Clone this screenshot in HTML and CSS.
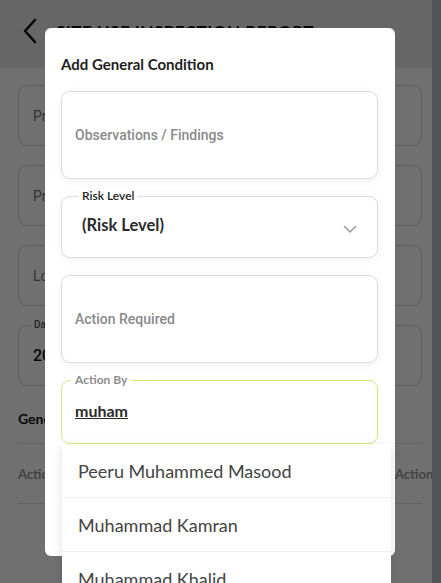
FILE: index.html
```html
<!DOCTYPE html>
<html lang="en">
<head>
  <meta charset="UTF-8" />
  <title>Site Use Inspection Report</title>
  <link rel="stylesheet" href="styles.css">
</head>
<body>
  <div class="app">
    <div class="page">
      <div class="topbar">
        <svg class="back" width="16" height="26" viewBox="0 0 16 26"><path d="M13 2 L3 13 L13 24" fill="none" stroke="#111" stroke-width="2.6" stroke-linecap="round" stroke-linejoin="round"/></svg>
        <div class="topbar-title">SITE USE INSPECTION REPORT</div>
      </div>
      <div class="content">
        <div class="card">Project Name</div>
        <div class="card">Project Number</div>
        <div class="card">Location</div>
        <div class="card card-date"><span class="card-label">Date</span>2024-05-14</div>
        <div class="section-title">General Conditions</div>
        <div class="table-row">
          <span>Action</span>
          <span class="col-right">Action</span>
        </div>
      </div>
    </div>
    <div class="scroll-strip"></div>
    <div class="backdrop"></div>

    <div class="modal">
      <div class="modal-title">Add General Condition</div>
      <div class="fields">
        <div class="field field-tall">
          <span class="placeholder">Observations / Findings</span>
        </div>
        <div class="field field-select">
          <span class="field-label">Risk Level</span>
          <span class="select-value">(Risk Level)</span>
          <svg class="chevron" width="14" height="9" viewBox="0 0 14 9"><path d="M1.5 1.5 L7 7 L12.5 1.5" fill="none" stroke="#9a9a9a" stroke-width="1.6" stroke-linecap="round" stroke-linejoin="round"/></svg>
        </div>
        <div class="field field-tall">
          <span class="placeholder">Action Required</span>
        </div>
        <div class="field-wrap">
          <div class="field field-focus">
            <span class="field-label label-muted">Action By</span>
            <span class="typed">muham</span>
          </div>
          <ul class="suggestions">
            <li>Peeru Muhammed Masood</li>
            <li>Muhammad Kamran</li>
            <li>Muhammad Khalid</li>
          </ul>
        </div>
      </div>
    </div>
  </div>
</body>
</html>
```

FILE: styles.css
```css
* {
  box-sizing: border-box;
}
body {
  margin: 0;
  font-family: "Lato", "Noto Sans", sans-serif;
  background: #fff;
}
.app {
  position: relative;
  width: 441px;
  height: 583px;
  overflow: hidden;
  display: flex;
}
.page {
  flex: 1;
  background: #fff;
  overflow: hidden;
}
.scroll-strip {
  width: 9px;
  background: #bfc2c7;
}
.topbar {
  height: 68px;
  background: #e8e8e8;
  display: flex;
  align-items: center;
  padding: 0 0 6px 22px;
  gap: 18px;
}
.topbar-title {
  font-weight: 700;
  font-size: 17px;
  color: #111;
  letter-spacing: 0.5px;
}
.content {
  padding: 17px 10px 0 18px;
}
.card {
  height: 61px;
  border: 1px solid #d6d6d6;
  border-radius: 9px;
  margin-bottom: 19px;
  display: flex;
  align-items: center;
  padding-left: 14px;
  font-family: "Roboto", sans-serif;
  font-size: 14px;
  color: #777;
}
.card-date {
  position: relative;
  margin-top: 6px;
  color: #111;
  font-size: 16px;
  font-weight: 500;
}
.card-label {
  position: absolute;
  top: -7px;
  left: 12px;
  background: #fff;
  padding: 0 3px;
  font-size: 10px;
  color: #555;
}
.section-title {
  font-weight: 700;
  font-size: 14px;
  color: #111;
  margin: 24px 0 16px;
}
.table-row {
  border-top: 1px solid #e4e4e4;
  border-bottom: 1px solid #e4e4e4;
  height: 61px;
  display: flex;
  align-items: center;
  font-size: 13px;
  color: #999;
  font-weight: 700;
}
.col-right {
  margin-left: auto;
  width: 27px;
  white-space: nowrap;
}
.backdrop {
  position: absolute;
  inset: 0;
  background: rgba(0, 0, 0, 0.56);
}

.modal {
  position: absolute;
  left: 45px;
  top: 28px;
  width: 350px;
  height: 528px;
  background: #fff;
  border-radius: 6px;
  padding: 28px 17px 0 16px;
}
.modal-title {
  font-weight: 700;
  font-size: 15px;
  color: #1e1e1e;
  line-height: 16px;
}
.fields {
  display: flex;
  flex-direction: column;
  gap: 17px;
  margin-top: 19px;
}
.field {
  position: relative;
  border: 1px solid #dcdcdc;
  border-radius: 9px;
  background: #fff;
  box-shadow: 0 2px 10px rgba(0, 0, 0, 0.06);
  display: flex;
  align-items: center;
  padding-left: 13px;
}
.field-tall {
  height: 88px;
}
.field-select {
  height: 62px;
  padding-left: 20px;
  padding-right: 20px;
  justify-content: space-between;
}
.field-focus {
  height: 64px;
  border-color: #dbe57a;
  box-shadow: none;
}
.placeholder {
  font-family: "Roboto", sans-serif;
  font-size: 14px;
  color: #8a8a8a;
  font-weight: 500;
}
.field-label {
  position: absolute;
  top: -8px;
  left: 16px;
  background: #fff;
  padding: 0 4px;
  font-size: 12px;
  line-height: 14px;
  font-weight: 600;
  color: #222;
}
.label-muted {
  left: 9px;
  color: #8c8c8c;
  font-weight: 700;
}
.select-value {
  font-size: 16.5px;
  font-weight: 700;
  color: #2a2a2a;
  margin-bottom: 4px;
}
.chevron {
  margin-top: 4px;
}
.typed {
  font-size: 16px;
  font-weight: 700;
  color: #2a2a2a;
  text-decoration: underline;
  margin-bottom: 4px;
}
.field-wrap {
  position: relative;
}
.suggestions {
  position: absolute;
  left: 1px;
  top: 64px;
  width: 329px;
  margin: 0;
  padding: 0;
  list-style: none;
  background: #fff;
  box-shadow: 0 3px 10px rgba(0, 0, 0, 0.12);
}
.suggestions li {
  height: 54px;
  display: flex;
  align-items: center;
  padding-left: 16px;
  font-size: 18px;
  color: #444;
  border-bottom: 1px solid #efefef;
}
```
